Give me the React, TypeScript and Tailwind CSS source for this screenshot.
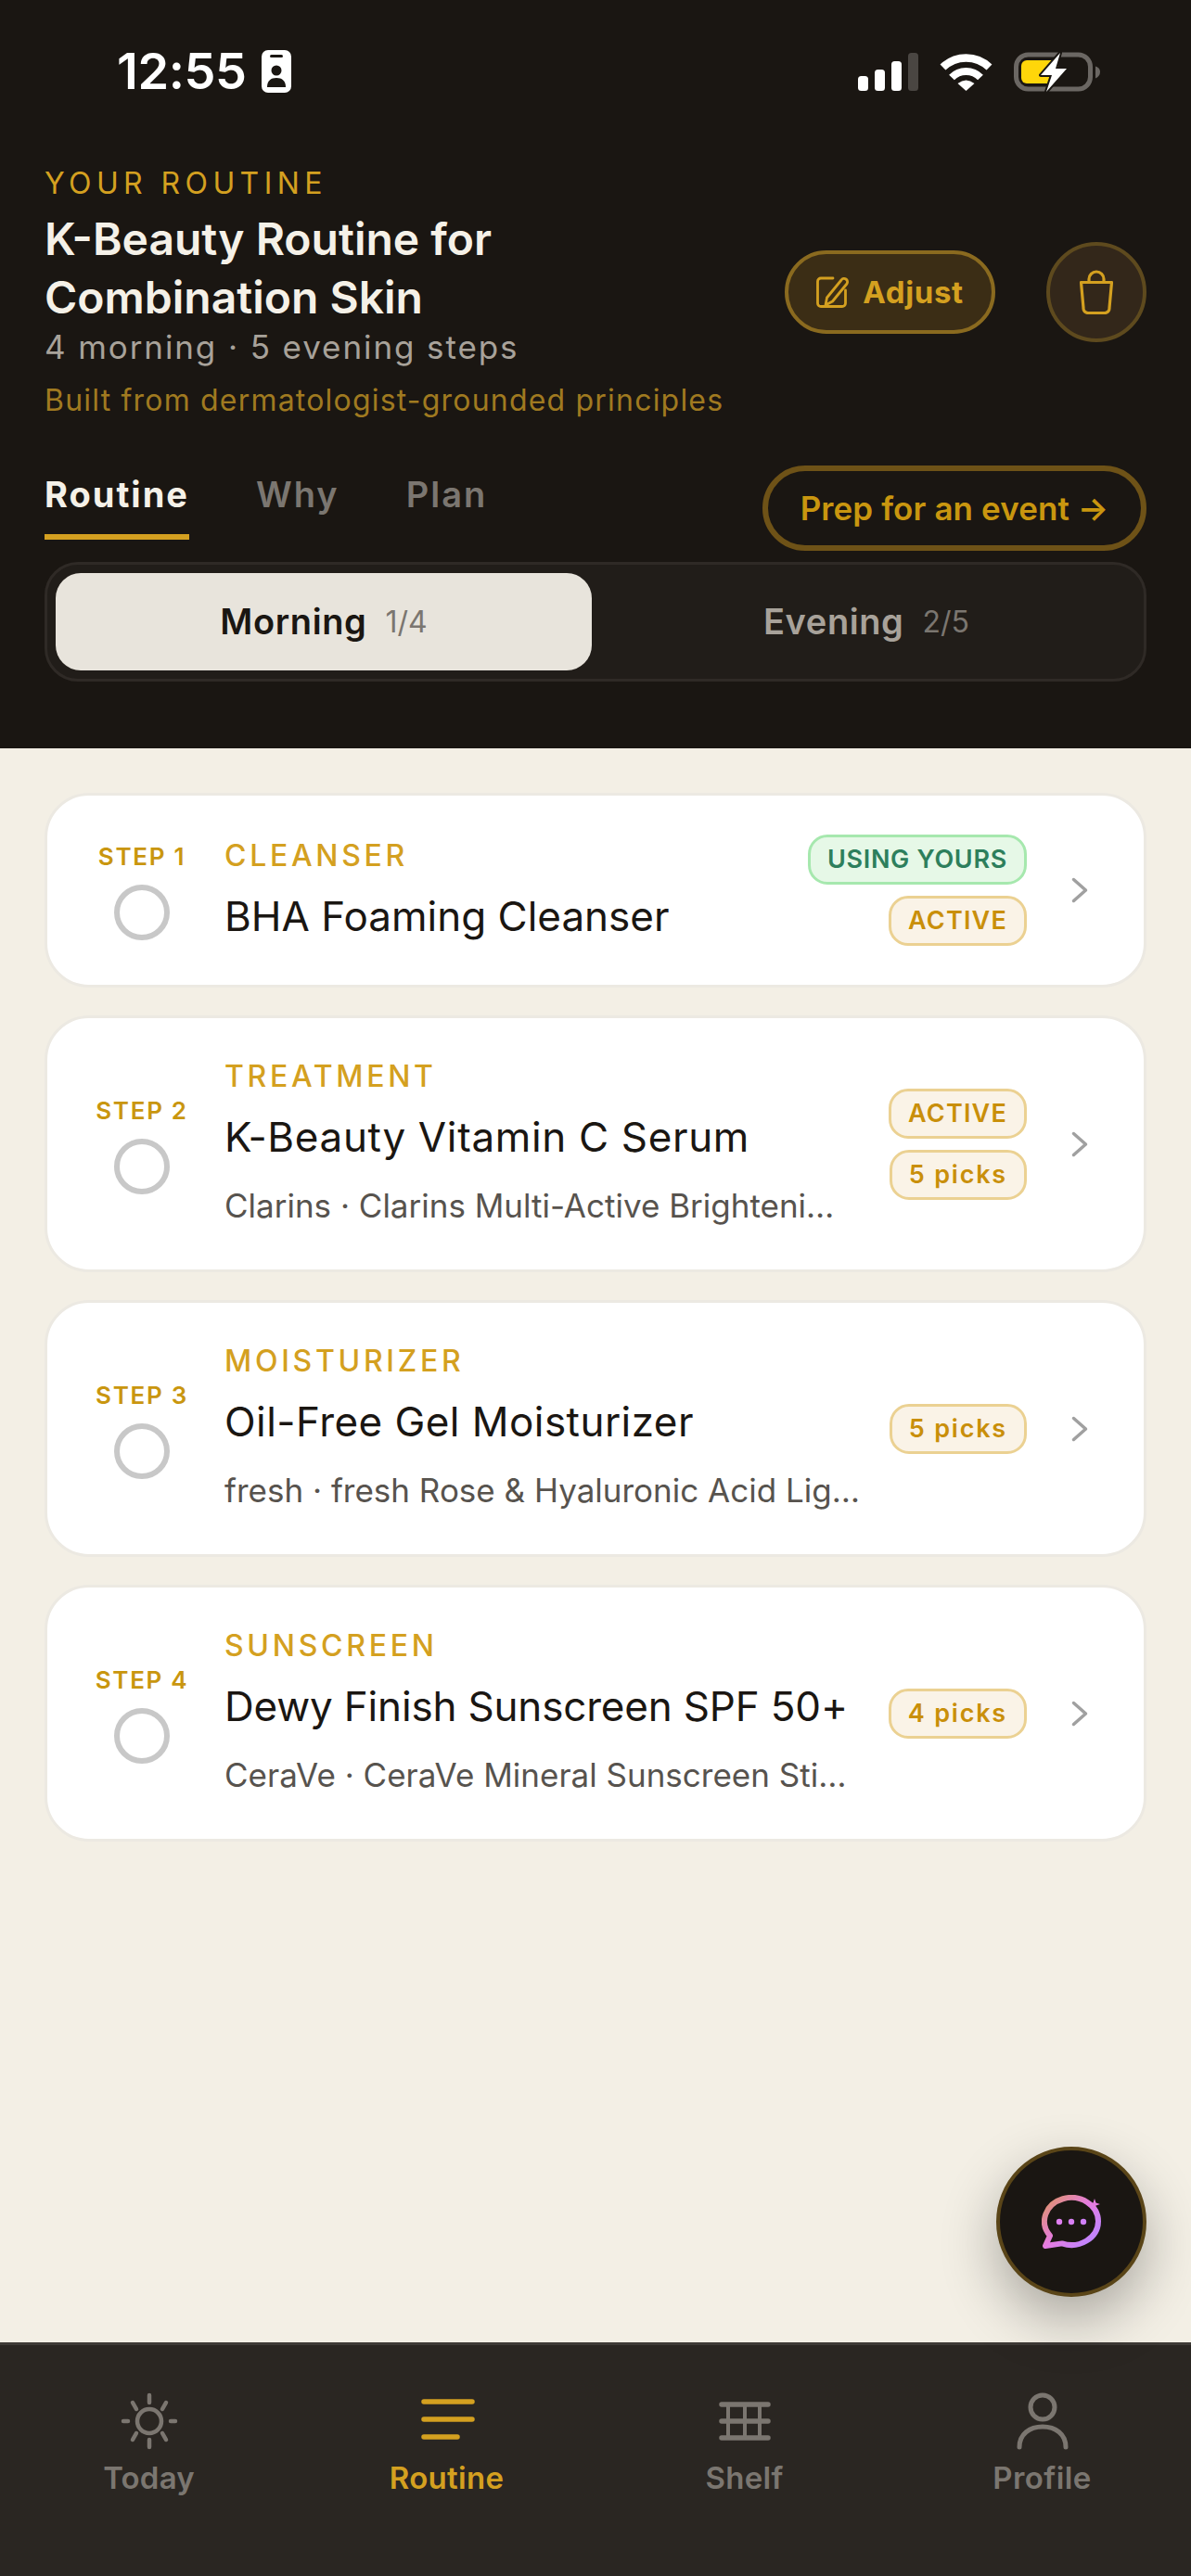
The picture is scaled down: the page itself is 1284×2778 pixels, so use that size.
const steps = [
  { n: 1, cat: "CLEANSER", name: "BHA Foaming Cleanser", nameClass: "tracking-normal", sub: "", badges: ["USING YOURS", "ACTIVE"] },
  { n: 2, cat: "TREATMENT", name: "K-Beauty Vitamin C Serum", nameClass: "tracking-[0.65px]", sub: "Clarins · Clarins Multi-Active Brighteni…", badges: ["ACTIVE", "5 picks"] },
  { n: 3, cat: "MOISTURIZER", name: "Oil-Free Gel Moisturizer", nameClass: "tracking-[0.45px]", sub: "fresh · fresh Rose & Hyaluronic Acid Lig…", badges: ["5 picks"] },
  { n: 4, cat: "SUNSCREEN", name: "Dewy Finish Sunscreen SPF 50+", nameClass: "tracking-[-0.18px]", sub: "CeraVe · CeraVe Mineral Sunscreen Sti…", badges: ["4 picks"] },
];

function StatusBar() {
  return (
    <div className="flex h-[154px] items-center justify-between pl-[126px] pr-[98px]">
      <div className="flex items-center gap-[16px]">
        <span className="text-[54px] leading-[60px] font-semibold text-white tracking-[-0.4px]">12:55</span>
        <svg width="32" height="46" viewBox="0 0 32 46">
          <rect width="32" height="46" rx="7" fill="#fff" />
          <rect x="9" y="5" width="14" height="3" rx="1.5" fill="#1a1612" />
          <circle cx="16" cy="22" r="5.500" fill="#1a1612" />
          <path d="M6 40c0-7 4-10 10-10s10 3 10 10z" fill="#1a1612" />
        </svg>
      </div>
      <div className="flex items-center gap-[23px]">
        <svg width="65" height="41" viewBox="0 0 65 41">
          <rect x="0" y="25" width="11" height="16" rx="3.5" fill="#fff" />
          <rect x="18" y="18" width="11" height="23" rx="3.5" fill="#fff" />
          <rect x="36" y="9" width="11" height="32" rx="3.5" fill="#fff" />
          <rect x="54" y="0" width="11" height="41" rx="3.5" fill="#4a4642" />
        </svg>
        <svg width="57" height="41" viewBox="0 0 57 41" fill="none">
          <path d="M3.500 15.500A36 36 0 0 1 53.500 15.500" stroke="#fff" strokeWidth="8.500" />
          <path d="M13 26.500A21.500 21.500 0 0 1 44 26.500" stroke="#fff" strokeWidth="8" />
          <path d="M19.500 33Q28.500 26 37.500 33L28.500 41Z" fill="#fff" />
        </svg>
        <svg width="93" height="43" viewBox="0 0 93 43" fill="none">
          <rect x="2.5" y="3" width="80" height="37" rx="13" stroke="#6b6763" strokeWidth="5" />
          <rect x="8" y="9" width="40" height="25" rx="6" fill="#ffd60a" />
          <path d="M88 15.5Q93 17 93 21.5T88 28.5Z" fill="#6b6763" />
          <path d="M50 1 29 25H41L35 43 57 18H45Z" fill="#fff" stroke="#1a1612" strokeWidth="4" paintOrder="stroke" strokeLinejoin="round" />
        </svg>
      </div>
    </div>
  );
}

function Badge({ label }: { label: string }) {
  if (label === "USING YOURS") {
    return (
      <span className="h-[54px] rounded-[21px] border-[3px] border-[#a6e8ae] bg-[#e6f8e7] px-[18px] text-[27px] leading-[47px] font-semibold tracking-[0.7px] text-[#2d7f5c] whitespace-nowrap">
        {label}
      </span>
    );
  }
  if (label === "ACTIVE") {
    return (
      <span className="h-[54px] rounded-[21px] border-[3px] border-[#ebd192] bg-[#faf3e7] px-[18px] text-[27px] leading-[47px] font-semibold tracking-[1.2px] text-[#c98f0a] whitespace-nowrap">
        {label}
      </span>
    );
  }
  return (
    <span className="h-[54px] rounded-[21px] border-[3px] border-[#ebd192] bg-[#faf3e7] px-[18px] text-[27px] leading-[47px] font-semibold tracking-[1.8px] text-[#c98f0a] whitespace-nowrap">
      {label}
    </span>
  );
}

function StepCard({ step }: { step: (typeof steps)[number] }) {
  return (
    <div className="flex items-center rounded-[48px] border-[3px] border-[#ece9e2] bg-white pl-[48px] pr-[45px] py-[42px]">
      <div className="flex w-[108px] shrink-0 flex-col items-center">
        <span className="text-[26px] leading-[36px] font-semibold tracking-[1.7px] text-[#c9960f] whitespace-nowrap">STEP {step.n}</span>
        <span className="mt-[12px] h-[60px] w-[60px] rounded-full border-[6px] border-[#c8c8c8]" />
      </div>
      <div className="ml-[35px] min-w-0 flex-1">
        <div className="text-[32px] leading-[42px] font-medium tracking-[3.7px] text-[#d4a020]">{step.cat}</div>
        <div className={`mt-[14px] text-[44px] leading-[60px] font-normal text-[#1a1612] whitespace-nowrap ${step.nameClass}`}>{step.name}</div>
        {step.sub && <div className="mb-[4px] mt-[22px] text-[35px] leading-[45px] text-[#57534e] whitespace-nowrap">{step.sub}</div>}
      </div>
      <div className="flex shrink-0 flex-col items-end gap-[12px]">
        {step.badges.map((b) => (
          <Badge key={b} label={b} />
        ))}
      </div>
      <svg className="ml-[33px] shrink-0" width="48" height="48" viewBox="0 0 48 48" fill="none">
        <path d="M17.500 12.500L30.500 24 17.500 35.500" stroke="#a0a0a0" strokeWidth="3.500" strokeLinecap="round" strokeLinejoin="round" />
      </svg>
    </div>
  );
}

function BottomNav() {
  return (
    <nav className="grid h-[252px] grid-cols-4 border-t-[3px] border-[#3e3a36] bg-[#2a2622] pt-[50px]">
      <div className="flex flex-col items-center">
        <svg width="64" height="64" viewBox="0 0 64 64" fill="none" stroke="#7b7670" strokeWidth="4.500" strokeLinecap="round">
          <circle cx="32" cy="32" r="13" />
          <path d="M32 4V12M32 52V60M4 32H9M55 32H60M14 12L18 19M50 12L46 19M14 52L18 45M50 52L46 45" />
        </svg>
        <span className="mt-[7px] text-[33px] leading-[44px] font-semibold tracking-[0.2px] text-[#7b7670]">Today</span>
      </div>
      <div className="flex flex-col items-center">
        <svg width="64" height="64" viewBox="0 0 64 64" fill="none" stroke="#d4a020" strokeWidth="5.500" strokeLinecap="round">
          <path d="M7 11H59M7 30H59M7 49H43" />
        </svg>
        <span className="mt-[7px] text-[33px] leading-[44px] font-semibold tracking-[0.3px] text-[#d4a020]">Routine</span>
      </div>
      <div className="flex flex-col items-center">
        <svg width="64" height="64" viewBox="0 0 64 64" fill="none" stroke="#7b7670" strokeLinecap="round">
          <path d="M7 14H57M7 32H57M7 50H57" strokeWidth="5.5" />
          <path d="M14 14V50M32 14V50M48 14V50" strokeWidth="4" />
        </svg>
        <span className="mt-[7px] text-[33px] leading-[44px] font-semibold tracking-[0.3px] text-[#7b7670]">Shelf</span>
      </div>
      <div className="flex flex-col items-center">
        <svg width="64" height="64" viewBox="0 0 64 64" fill="none" stroke="#7b7670" strokeWidth="5" strokeLinecap="round">
          <ellipse cx="32" cy="17" rx="13" ry="13" />
          <path d="M7 60C7 46 18 38 32 38S57 46 57 60" />
        </svg>
        <span className="mt-[7px] text-[33px] leading-[44px] font-semibold tracking-[0.4px] text-[#7b7670]">Profile</span>
      </div>
    </nav>
  );
}

export default function App() {
  return (
    <div className="relative flex h-[2778px] w-[1284px] flex-col overflow-hidden bg-[#f3efe5] font-[Inter,sans-serif] antialiased">
      <header className="bg-[#1a1612]">
        <StatusBar />
        <div className="px-[48px] pb-[72px] pt-[23px]">
          <div className="flex items-center justify-between">
            <div>
              <div className="text-[32px] leading-[42px] font-normal tracking-[5.4px] text-[#d4a020]">YOUR ROUTINE</div>
              <h1 className="mt-[7px] text-[48px] leading-[63px] font-semibold text-[#f5f1e8]">
                K-Beauty Routine for
                <br />
                Combination Skin
              </h1>
              <div className="mt-px text-[35px] leading-[42px] tracking-[1.9px] text-[#a8a29a]">4 morning · 5 evening steps</div>
              <div className="mt-[16px] text-[32px] leading-[42px] tracking-[1.2px] text-[#a07a20]">Built from dermatologist-grounded principles</div>
            </div>
            <div className="flex items-center gap-[55px]">
              <button className="flex h-[90px] w-[227px] items-center justify-center gap-[14px] rounded-full border-[4px] border-[#8a6a1f] bg-[#3b2d15] text-[33px] font-bold tracking-[0.6px] text-[#d4a020]">
                <svg width="36" height="34" viewBox="0 0 36 34" fill="none" stroke="#d4a020" strokeWidth="2.8" strokeLinecap="round" strokeLinejoin="round">
                  <path d="M18 2H5A3.5 3.5 0 0 0 1.5 5.5V29A3.5 3.5 0 0 0 5 32.5H28A3.5 3.5 0 0 0 31.500 29V15" />
                  <path d="M10 31L11.500 23 27 4A3.200 3.200 0 0 1 33 8L17.500 27Z" />
                </svg>
                <span className="translate-y-px">Adjust</span>
              </button>
              <button className="flex h-[108px] w-[108px] items-center justify-center rounded-full border-[4px] border-[#5e4a1e] bg-[#33271a]">
                <svg width="36" height="48" viewBox="0 0 36 48" fill="none" stroke="#d4a020" strokeWidth="3.200" strokeLinejoin="round">
                  <path d="M1.500 13.500H34.500L32 41A5 5 0 0 1 27 46.500H9A5 5 0 0 1 4 41Z" />
                  <path d="M10 13V10A8 8 0 0 1 26 10V13" />
                </svg>
              </button>
            </div>
          </div>

          <div className="mt-[49px] flex items-start justify-between">
            <div className="flex gap-[72px] pt-[10px]">
              <div className="border-b-[6px] border-[#d4a020] pb-[22px] text-[38px] leading-[42px] font-bold tracking-[2px] text-[#f5f1e8]">Routine</div>
              <div className="text-[38px] leading-[42px] font-semibold tracking-[2px] text-[#7b7670]">Why</div>
              <div className="text-[38px] leading-[42px] font-semibold tracking-[2px] text-[#7b7670]">Plan</div>
            </div>
            <button className="flex h-[92px] w-[414px] items-center justify-center rounded-full border-[6px] border-[#6e5217] text-[35px] font-semibold tracking-[0.1px] text-[#c9960f] whitespace-nowrap">
              Prep for an event →
            </button>
          </div>

          <div className="mt-[12px] flex h-[129px] rounded-[36px] border-[3px] border-[#2f2a26] bg-[#211d19] p-[9px]">
            <div className="flex w-[578px] items-center justify-center gap-[20px] rounded-[27px] bg-[#e8e4dc]">
              <span className="text-[38px] font-semibold tracking-[0.6px] text-[#1a1612]">Morning</span>
              <span className="text-[32px] text-[#7b7670]">1/4</span>
            </div>
            <div className="flex flex-1 items-center justify-center gap-[20px] pl-[6px]">
              <span className="text-[38px] font-semibold tracking-[0.6px] text-[#a8a29a]">Evening</span>
              <span className="text-[32px] text-[#7b7670]">2/5</span>
            </div>
          </div>
        </div>
      </header>

      <main className="flex flex-1 flex-col gap-[30px] px-[48px] pt-[48px]">
        {steps.map((s) => (
          <StepCard key={s.n} step={s} />
        ))}
      </main>

      <button className="absolute bottom-[301px] right-[48px] flex h-[162px] w-[162px] items-center justify-center rounded-full border-[4px] border-[#5a4518] bg-[#1a1612] shadow-[0_24px_60px_rgba(0,0,0,0.3)]">
        <svg width="64" height="58" viewBox="0 0 64 58" fill="none">
          <defs>
            <linearGradient id="chatGrad" gradientUnits="userSpaceOnUse" x1="10" y1="5" x2="55" y2="50">
              <stop offset="0" stopColor="#df8f78" />
              <stop offset="0.5" stopColor="#e57ce2" />
              <stop offset="1" stopColor="#bf85ff" />
            </linearGradient>
          </defs>
          <path d="M9 44A29 25.500 0 1 1 22 52.400L4 55Z" stroke="url(#chatGrad)" strokeWidth="6" strokeLinejoin="round" />
          <path d="M57 4L58.500 8.500 63 10 58.500 11.500 57 16 55.500 11.500 51 10 55.500 8.500Z" fill="#e57ce2" />
          <circle cx="19" cy="29" r="3.200" fill="#e080f0" />
          <circle cx="32" cy="29" r="3.200" fill="#d880f4" />
          <circle cx="45" cy="29" r="3.200" fill="#d080f8" />
        </svg>
      </button>

      <BottomNav />
    </div>
  );
}
